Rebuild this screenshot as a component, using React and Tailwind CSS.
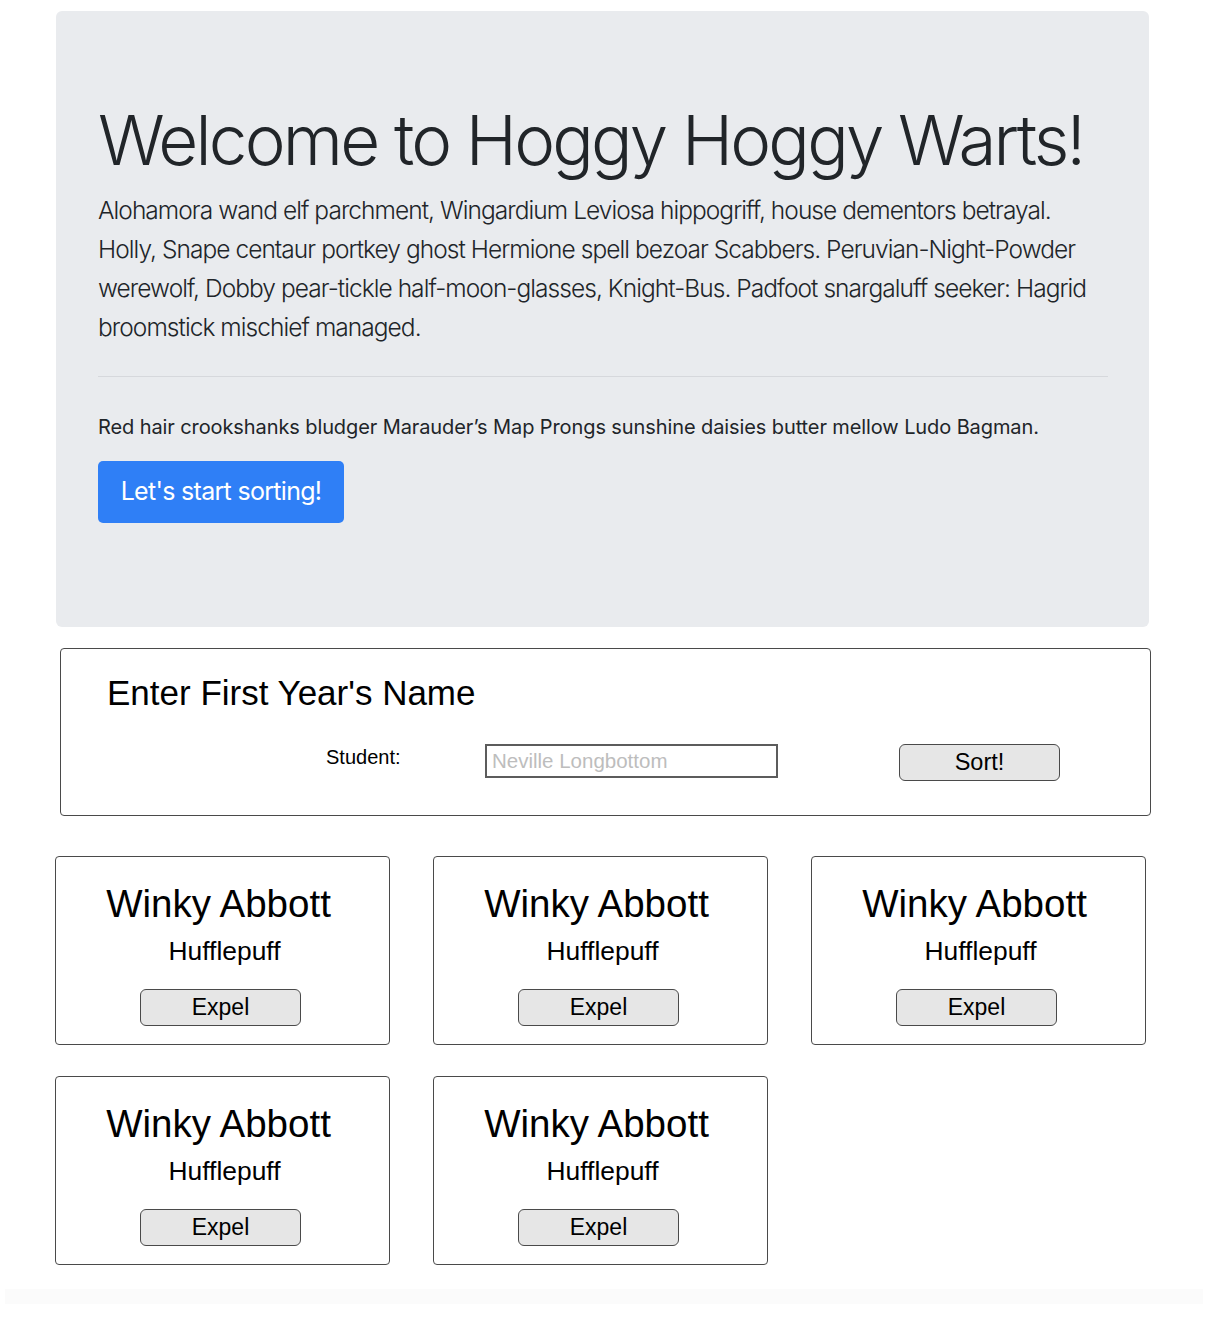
export default function App() {
  const cards = [0, 1, 2, 3, 4];
  return (
    <div className="min-h-[1334px] bg-white font-['Inter',sans-serif]">
      <div className="pt-[11px] pl-[56px] pr-[59px]">
        <div className="bg-[#e9ebee] rounded-[6px] pt-[87px] pb-[104px] pl-[42px] pr-[41px] text-[#212529]">
          <h1 className="text-[69px] leading-[84px] font-light tracking-[-2.8px] whitespace-nowrap">Welcome to Hoggy Hoggy Warts!</h1>
          <p className="mt-[9px] text-[24.5px] leading-[39px] font-light tracking-[-0.95px]">
            Alohamora wand elf parchment, Wingardium Leviosa hippogriff, house dementors betrayal. Holly, Snape centaur portkey ghost Hermione spell bezoar Scabbers. Peruvian-Night-Powder werewolf, Dobby pear-tickle half-moon-glasses, Knight-Bus. Padfoot snargaluff seeker: Hagrid broomstick mischief managed.
          </p>
          <hr className="mt-[29px] border-0 border-t border-[#d6d8dc]" />
          <p className="mt-[35px] text-[20px] leading-[31px] tracking-[-0.1px]">
            Red hair crookshanks bludger Marauder’s Map Prongs sunshine daisies butter mellow Ludo Bagman.
          </p>
          <button className="mt-[18px] w-[246px] h-[62px] rounded-[5px] bg-[#2f7ff6] text-white text-[25px] tracking-[-0.7px]">
            Let's start sorting!
          </button>
        </div>
      </div>

      <div className="ml-[60px] mt-[21px] w-[1091px] h-[168px] border-[1.5px] border-[#4a4a4a] rounded-[4px] pl-[46px] pt-[24px] font-['Liberation_Sans',Arial,sans-serif] text-black">
        <h2 className="text-[35px] leading-[40px]">Enter First Year's Name</h2>
        <div className="mt-[31px] flex items-start">
          <div className="ml-[219px] w-[159px] h-[34px] flex items-center text-[20px] -mt-[4px]">Student:</div>
          <input
            className="w-[293px] h-[34px] border-2 border-[#5c5c5c] px-[5px] text-[20.5px] outline-none placeholder:text-[#bdbdbd]"
            placeholder="Neville Longbottom"
          />
          <button className="ml-[121px] w-[161px] h-[37px] bg-[#e6e6e6] border-[1.5px] border-[#4a4a4a] rounded-[6px] text-[23.5px]">
            Sort!
          </button>
        </div>
      </div>

      <div className="ml-[55px] mt-[40px] grid grid-cols-[335px_335px_335px] gap-x-[43px] gap-y-[31px] font-['Liberation_Sans',Arial,sans-serif] text-black">
        {cards.map((i) => (
          <div key={i} className="h-[189px] border-[1.5px] border-[#4a4a4a] rounded-[4px] flex flex-col items-center pt-[25px]">
            <div className="text-[38.5px] leading-[44px] -ml-[8px]">Winky Abbott</div>
            <div className="mt-[10px] ml-[4px] text-[26.4px] leading-[30px]">Hufflepuff</div>
            <button className="mt-[23px] -ml-[4px] w-[161px] h-[37px] bg-[#e6e6e6] border-[1.5px] border-[#4a4a4a] rounded-[6px] text-[23px]">
              Expel
            </button>
          </div>
        ))}
      </div>

      <div className="mt-[24px] mx-[5px] h-[15px] bg-[#fbfbfb]" />
    </div>
  );
}
